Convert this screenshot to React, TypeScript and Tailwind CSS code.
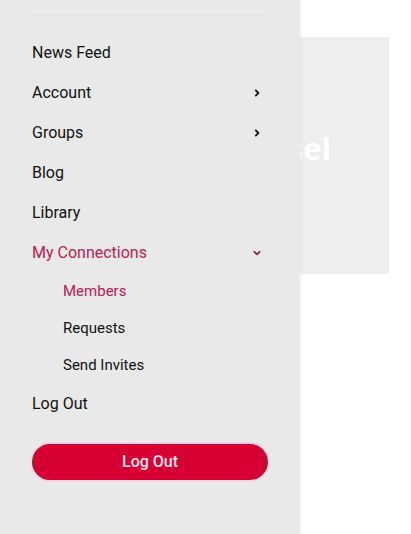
import { ReactNode } from "react";

function Chevron({ down = false }: { down?: boolean }) {
  return (
    <svg
      width="10"
      height="10"
      viewBox="0 0 10 10"
      className={down ? "rotate-90" : ""}
      fill="none"
      stroke="currentColor"
      strokeWidth="1.8"
      strokeLinecap="round"
      strokeLinejoin="round"
    >
      <path d="M3.8 2.4 L6.4 5 L3.8 7.6" />
    </svg>
  );
}

function Row({
  children,
  arrow,
  active,
}: {
  children: ReactNode;
  arrow?: "right" | "down";
  active?: boolean;
}) {
  return (
    <div
      className={`flex h-10 items-center justify-between text-[16px] ${
        active ? "text-[#b8214a]" : "text-[#111]"
      }`}
    >
      <span>{children}</span>
      {arrow && (
        <span className={`mr-[6px] ${active ? "text-[#8a2b3f]" : "text-[#111]"}`}>
          <Chevron down={arrow === "down"} />
        </span>
      )}
    </div>
  );
}

function SubRow({ children, active }: { children: ReactNode; active?: boolean }) {
  return (
    <div
      className={`flex h-[37px] items-center pl-[31px] text-[15px] ${
        active ? "text-[#b8214a]" : "text-[#111]"
      }`}
    >
      {children}
    </div>
  );
}

export default function App() {
  return (
    <div
      className="relative h-[534px] w-[411px] overflow-hidden bg-white"
      style={{ fontFamily: 'Roboto, "Liberation Sans", Arial, sans-serif' }}
    >
      {/* page content behind the drawer */}
      <div className="ml-[22px] mt-[37px] h-[237px] w-[367px] bg-[#eeeeee] pr-[58px] pt-[96px] text-right">
        <span
          className="text-[31px] font-bold leading-none text-white"
          style={{ fontFamily: '"Open Sans", sans-serif' }}
        >
          Carousel
        </span>
      </div>

      {/* drawer */}
      <aside className="absolute left-0 top-0 flex h-full w-[300px] flex-col bg-[#e9e9e9] px-[32px] shadow-[1px_0_3px_rgba(0,0,0,0.06)]">
        <div className="mt-[15px] h-px bg-[#e2e2e2]" />
        <nav className="mt-[17px] flex flex-col">
          <Row>News Feed</Row>
          <Row arrow="right">Account</Row>
          <Row arrow="right">Groups</Row>
          <Row>Blog</Row>
          <Row>Library</Row>
          <Row arrow="down" active>
            My Connections
          </Row>
          <SubRow active>Members</SubRow>
          <SubRow>Requests</SubRow>
          <SubRow>Send Invites</SubRow>
          <Row>Log Out</Row>
        </nav>
        <button className="mt-[20px] flex h-[36px] w-full items-center justify-center rounded-full border-x-2 border-x-[#8b2c36] bg-[#d70032] text-[16px] font-medium text-[#ffe3ee] shadow-[0_0_0_2px_#fdd3e6]">
          Log Out
        </button>
      </aside>
    </div>
  );
}
